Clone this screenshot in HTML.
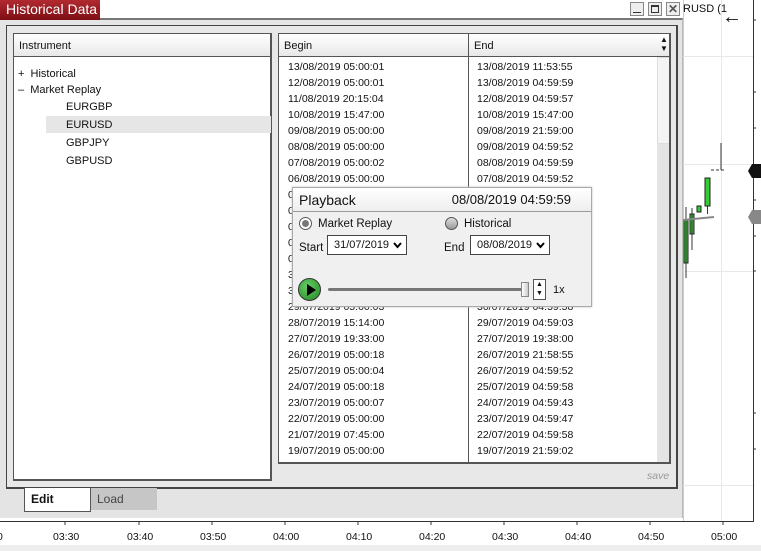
<!DOCTYPE html>
<html><head><meta charset="utf-8"><style>
*{box-sizing:border-box;margin:0;padding:0}
body{width:761px;height:551px;overflow:hidden;background:#fff;font-family:"Liberation Sans",Arial,sans-serif;font-size:11px;color:#111;position:relative}
.abs{position:absolute}
.hdr{background:linear-gradient(#fff,#e8e8e8);border-bottom:1px solid #555}
.row{position:absolute;left:9px;font-size:10.5px;line-height:16px}
</style></head><body>
<!-- chart area -->
<div class="abs" style="left:683px;top:0;width:1px;height:521px;background:#ccc"></div>
<div class="abs" style="left:721px;top:0;width:1px;height:521px;background:#e8e8e8"></div>
<div class="abs" style="left:683px;top:56px;width:70px;height:1px;background:#e8e8e8"></div>
<div class="abs" style="left:683px;top:164px;width:70px;height:1px;background:#e8e8e8"></div>
<div class="abs" style="left:683px;top:271px;width:70px;height:1px;background:#e8e8e8"></div>
<div class="abs" style="left:683px;top:485px;width:70px;height:1px;background:#e8e8e8"></div>
<div class="abs" style="left:753px;top:0;width:1px;height:522px;background:#333"></div>
<div class="abs" style="left:0;top:521px;width:754px;height:1px;background:#333"></div>
<svg class="abs" style="left:0;top:518px" width="761" height="8">
<g stroke="#333"><line x1="65" y1="3" x2="65" y2="7"/><line x1="139" y1="3" x2="139" y2="7"/><line x1="212" y1="3" x2="212" y2="7"/><line x1="285" y1="3" x2="285" y2="7"/><line x1="358" y1="3" x2="358" y2="7"/><line x1="431" y1="3" x2="431" y2="7"/><line x1="504" y1="3" x2="504" y2="7"/><line x1="577" y1="3" x2="577" y2="7"/><line x1="650" y1="3" x2="650" y2="7"/><line x1="723" y1="3" x2="723" y2="7"/></g></svg>
<svg class="abs" style="left:753px;top:0" width="8" height="520"><g stroke="#333"><line x1="0" y1="20" x2="3" y2="20"/><line x1="0" y1="92" x2="3" y2="92"/><line x1="0" y1="128" x2="3" y2="128"/><line x1="0" y1="200" x2="3" y2="200"/><line x1="0" y1="236" x2="3" y2="236"/><line x1="0" y1="271" x2="3" y2="271"/><line x1="0" y1="413" x2="3" y2="413"/><line x1="0" y1="449" x2="3" y2="449"/></g></svg>
<div class="abs" style="left:683px;top:3px;font-size:11px">RUSD (1</div>
<div class="abs" style="left:722px;top:7px;font-size:20px;line-height:20px">&#8592;</div>
<svg class="abs" style="left:683px;top:140px" width="78" height="150">
<line x1="38" y1="3" x2="38" y2="30" stroke="#333"/><line x1="28" y1="30" x2="42" y2="30" stroke="#333" stroke-dasharray="3,2"/>
<rect x="22" y="38" width="5" height="28" fill="#3c3" stroke="#222"/>
<line x1="24.5" y1="66" x2="24.5" y2="74" stroke="#333"/>
<rect x="14" y="66" width="4" height="6" fill="#3c3" stroke="#222"/>
<rect x="7" y="74" width="4" height="20" fill="#3c3" stroke="#222"/>
<line x1="9" y1="68" x2="9" y2="110" stroke="#333"/>
<rect x="1" y="80" width="4" height="43" fill="#3c3" stroke="#222"/>
<line x1="3" y1="67" x2="3" y2="138" stroke="#333"/>
<line x1="0" y1="80" x2="31" y2="77" stroke="#888" stroke-width="2"/>
<polygon points="65,31 69,24 78,24 78,38 69,38" fill="#111"/>
<polygon points="65,77 69,70 78,70 78,84 69,84" fill="#888"/>
</svg>
<div class="abs" style="left:0;top:545px;width:761px;height:6px;background:#eee"></div>
<div class="abs" style="left:0;top:525px;width:761px;height:20px;font-size:10.5px">
<span class="abs" style="left:-3px;top:6px">0</span>
<span class="abs" style="left:53px;top:6px">03:30</span><span class="abs" style="left:127px;top:6px">03:40</span><span class="abs" style="left:200px;top:6px">03:50</span><span class="abs" style="left:273px;top:6px">04:00</span><span class="abs" style="left:346px;top:6px">04:10</span><span class="abs" style="left:419px;top:6px">04:20</span><span class="abs" style="left:492px;top:6px">04:30</span><span class="abs" style="left:565px;top:6px">04:40</span><span class="abs" style="left:638px;top:6px">04:50</span><span class="abs" style="left:711px;top:6px">05:00</span>
</div>
<!-- window -->
<div class="abs" style="left:0;top:18px;width:683px;height:500px;background:#e4e4e4;border-top:2px solid #777;border-right:1px solid #bbb"></div>
<div class="abs" style="left:0;top:0;width:100px;height:20px;background:linear-gradient(#b02a30,#7d0f14);color:#fff;font-size:14px;line-height:19px;padding-left:6px">Historical Data</div>
<div class="abs" style="left:630px;top:2px;width:14px;height:14px;border:1px solid #888;background:#eee"><div style="position:absolute;left:2px;bottom:2px;width:8px;height:1px;background:#333"></div></div>
<div class="abs" style="left:648px;top:2px;width:14px;height:14px;border:1px solid #888;background:#eee"><div style="position:absolute;left:2px;top:2px;width:8px;height:8px;border:1px solid #333;border-top-width:2px"></div></div>
<div class="abs" style="left:666px;top:2px;width:14px;height:14px;border:1px solid #888;background:#eee;font-size:12px;line-height:12px;text-align:center;font-weight:bold;color:#555">&#10005;</div>
<div class="abs" style="left:6px;top:25px;width:672px;height:464px;border:1px solid #444;border-right-width:2px;border-bottom-width:2px;background:#e8e8e8"></div>
<!-- instrument -->
<div class="abs" style="left:13px;top:33px;width:259px;height:448px;background:#fff;border:1px solid #555;border-right-width:2px;border-bottom-width:2px">
<div class="hdr" style="height:23px;padding:6px 0 0 5px">Instrument</div>
<div class="abs" style="left:4px;top:32px;line-height:16px;font-size:11px">+&nbsp; Historical<br>&#8211;&nbsp; Market Replay</div>
<div class="abs" style="left:32px;top:82px;width:225px;height:17px;background:#e6e6e6"></div>
<div class="abs" style="left:52px;top:64px;line-height:18px;font-size:11px">EURGBP<br>EURUSD<br>GBPJPY<br>GBPUSD</div>
</div>
<!-- table -->
<div class="abs" style="left:278px;top:33px;width:393px;height:431px;background:#fff;border:1px solid #555;border-right-width:2px;border-bottom-width:2px;overflow:hidden">
<div class="hdr" style="height:23px;position:relative"><span class="abs" style="left:5px;top:6px">Begin</span><span class="abs" style="left:195px;top:6px">End</span>
<span class="abs" style="left:381px;top:1px;font-size:8px;line-height:9px">&#9650;<br>&#9660;</span></div>
<div class="abs" style="left:189px;top:0;width:1px;height:431px;background:#555"></div>
<div class="abs" style="left:378px;top:23px;width:13px;height:410px;background:#e4e4e4"></div>
<div class="abs" style="left:378px;top:23px;width:13px;height:87px;background:#f4f4f4;border:1px solid #ddd"></div>
<div class="row" style="top:25px">13/08/2019 05:00:01<br>12/08/2019 05:00:01<br>11/08/2019 20:15:04<br>10/08/2019 15:47:00<br>09/08/2019 05:00:00<br>08/08/2019 05:00:00<br>07/08/2019 05:00:02<br>06/08/2019 05:00:00<br>05/08/2019 05:00:00<br>04/08/2019 05:00:00<br>03/08/2019 05:00:00<br>02/08/2019 05:00:00<br>01/08/2019 05:00:00<br>31/07/2019 05:00:00<br>30/07/2019 05:00:00<br>29/07/2019 05:00:03<br>28/07/2019 15:14:00<br>27/07/2019 19:33:00<br>26/07/2019 05:00:18<br>25/07/2019 05:00:04<br>24/07/2019 05:00:18<br>23/07/2019 05:00:07<br>22/07/2019 05:00:00<br>21/07/2019 07:45:00<br>19/07/2019 05:00:00<br>18/07/2019 05:00:04</div>
<div class="row" style="top:25px;left:198px">13/08/2019 11:53:55<br>13/08/2019 04:59:59<br>12/08/2019 04:59:57<br>10/08/2019 15:47:00<br>09/08/2019 21:59:00<br>09/08/2019 04:59:52<br>08/08/2019 04:59:59<br>07/08/2019 04:59:52<br>06/08/2019 04:59:59<br>05/08/2019 04:59:59<br>04/08/2019 04:59:59<br>03/08/2019 04:59:59<br>02/08/2019 04:59:59<br>01/08/2019 04:59:59<br>31/07/2019 04:59:59<br>30/07/2019 04:59:58<br>29/07/2019 04:59:03<br>27/07/2019 19:38:00<br>26/07/2019 21:58:55<br>26/07/2019 04:59:52<br>25/07/2019 04:59:58<br>24/07/2019 04:59:43<br>23/07/2019 04:59:47<br>22/07/2019 04:59:58<br>19/07/2019 21:59:02<br>19/07/2019 04:59:55</div>
</div>
<div class="abs" style="left:647px;top:470px;font-size:10.5px;font-style:italic;color:#999">save</div>
<!-- tabs -->
<div class="abs" style="left:90px;top:488px;width:67px;height:22px;background:#c6c6c6;padding:4px 0 0 7px;font-size:12px;color:#444">Load</div>
<div class="abs" style="left:24px;top:488px;width:67px;height:24px;background:#fff;border:1px solid #555;border-top:none;padding:4px 0 0 6px;font-size:12px;font-weight:bold">Edit</div>
<!-- playback -->
<div class="abs" style="left:292px;top:187px;width:300px;height:120px;background:#f0f0f0;border:1px solid #aaa;box-shadow:0 0 2px #bbb">
<div style="height:24px;border-bottom:1px solid #999;background:linear-gradient(#fff,#eee);position:relative">
<span class="abs" style="left:6px;top:4px;font-size:14px">Playback</span><span class="abs" style="right:20px;top:4px;font-size:13px">08/08/2019 04:59:59</span></div>
<div class="abs" style="left:6px;top:29px;width:13px;height:13px;border-radius:50%;border:1px solid #555;background:#fff"><div style="margin:2px;width:7px;height:7px;border-radius:50%;background:#777"></div></div>
<span class="abs" style="left:25px;top:30px;font-size:11.5px">Market Replay</span>
<div class="abs" style="left:152px;top:29px;width:13px;height:13px;border-radius:50%;border:1px solid #555;background:linear-gradient(#ddd,#999)"></div>
<span class="abs" style="left:171px;top:30px;font-size:11.5px">Historical</span>
<span class="abs" style="left:6px;top:54px;font-size:11.5px">Start</span>
<div class="abs" style="left:34px;top:47px;width:80px;height:20px;border:1px solid #444;background:#fff;padding:3px 0 0 6px;font-size:11px">31/07/2019<svg style="position:absolute;right:4px;top:6px" width="9" height="7"><path d="M1 1 L4.5 5 L8 1" stroke="#000" stroke-width="2" fill="none"/></svg></div>
<span class="abs" style="left:151px;top:54px;font-size:11.5px">End</span>
<div class="abs" style="left:177px;top:47px;width:80px;height:20px;border:1px solid #444;background:#fff;padding:3px 0 0 6px;font-size:11px">08/08/2019<svg style="position:absolute;right:4px;top:6px" width="9" height="7"><path d="M1 1 L4.5 5 L8 1" stroke="#000" stroke-width="2" fill="none"/></svg></div>
<div class="abs" style="left:5px;top:90px;width:23px;height:23px;border-radius:50%;background:radial-gradient(circle at 40% 35%,#6c6,#282);border:1px solid #333"><div style="position:absolute;left:8px;top:5px;border-left:9px solid #000;border-top:6px solid transparent;border-bottom:6px solid transparent"></div></div>
<div class="abs" style="left:35px;top:100px;width:200px;height:3px;background:#777;border-radius:2px"></div>
<div class="abs" style="left:228px;top:94px;width:8px;height:15px;background:linear-gradient(90deg,#fff,#ccc);border:1px solid #888"></div>
<div class="abs" style="left:240px;top:91px;width:13px;height:21px;border:1px solid #555;background:#fff;font-size:7px;line-height:9px;text-align:center">&#9650;<br>&#9660;</div>
<span class="abs" style="left:260px;top:96px;font-size:11px">1x</span>
</div>
</body></html>
